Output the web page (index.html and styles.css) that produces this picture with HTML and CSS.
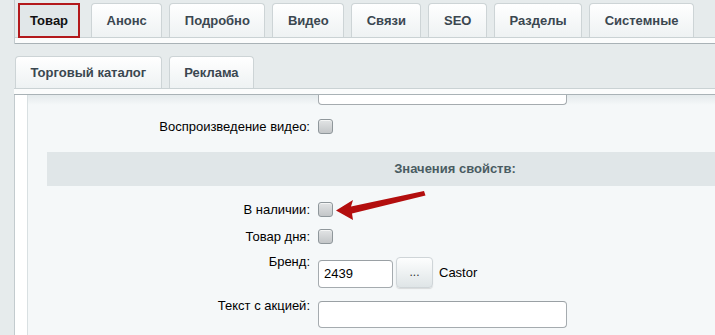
FILE: index.html
```html
<!DOCTYPE html>
<html lang="ru">
<head>
<meta charset="utf-8">
<title>Товар</title>
<link rel="stylesheet" href="styles.css">
</head>
<body>
<div class="tabbar tabbar-first">
  <div class="tabs">
    <div class="tab active">Товар</div>
    <div class="tab">Анонс</div>
    <div class="tab">Подробно</div>
    <div class="tab">Видео</div>
    <div class="tab">Связи</div>
    <div class="tab">SEO</div>
    <div class="tab">Разделы</div>
    <div class="tab">Системные</div>
  </div>
  <div class="band"></div>
</div>
<div class="tabbar tabbar-second">
  <div class="tabs">
    <div class="tab">Торговый каталог</div>
    <div class="tab">Реклама</div>
  </div>
  <div class="band"></div>
</div>
<div class="content">
  <div class="strip"></div>
  <div class="main">
    <div class="form">
      <div class="row row-cut">
        <div class="label"></div>
        <div class="value"><div class="input wide cut"></div></div>
      </div>
      <div class="row row-video">
        <div class="label">Воспроизведение видео:</div>
        <div class="value"><span class="checkbox"></span></div>
      </div>
      <div class="section">Значения свойств:</div>
      <div class="row row-stock">
        <div class="label">В наличии:</div>
        <div class="value"><span class="checkbox"></span></div>
        <svg class="arrow" width="100" height="40" viewBox="0 0 100 40">
          <polygon points="6,23.5 23,13 21,19.5 94,4 95.5,8.5 22,26.5 23,33" fill="#b30e0e"/>
        </svg>
      </div>
      <div class="row">
        <div class="label">Товар дня:</div>
        <div class="value"><span class="checkbox"></span></div>
      </div>
      <div class="row row-brand">
        <div class="label top">Бренд:</div>
        <div class="value">
          <div class="input short">2439</div>
          <div class="btn">...</div>
          <span class="brand-name">Castor</span>
        </div>
      </div>
      <div class="row row-text">
        <div class="label top">Текст с акцией:</div>
        <div class="value"><div class="input wide"></div></div>
      </div>
    </div>
  </div>
</div>
</body>
</html>
```
FILE: styles.css
```css
html, body {
  margin: 0;
  padding: 0;
}
body {
  width: 715px;
  height: 335px;
  overflow: hidden;
  background: #e6ebec;
  font-family: "Liberation Sans", Arial, sans-serif;
  font-size: 13px;
  color: #000;
}
.tabbar {
  margin-left: 14px;
  width: 900px;
}
.tabbar-first {
  border-left: 1px solid #c3cbce;
}
.tabbar-first .tabs {
  padding: 3px 0 0 3px;
  height: 34px;
}
.tabbar-second {
  margin-top: 12px;
}
.tabbar-second .tabs {
  padding-left: 1px;
  height: 32px;
}
.tabs {
  display: flex;
  gap: 7px;
  align-items: flex-start;
}
.tab {
  box-sizing: border-box;
  height: 100%;
  padding: 0 14.5px;
  border: 1px solid #cdd4d6;
  border-bottom: none;
  border-radius: 4px 4px 0 0;
  background: linear-gradient(#ffffff, #eef2f3);
  color: #3b4750;
  font-weight: bold;
  display: flex;
  align-items: center;
  white-space: nowrap;
}
.tab.active {
  position: relative;
  z-index: 1;
  height: 35px;
  padding: 0 10px 0 10px;
  border: 2px solid #b3191c;
  border-radius: 0;
  background: #e1e7e9;
  color: #111;
  margin-right: 4px;
}
.band {
  height: 5px;
  background: #fbfcfc;
  border-top: 1px solid #cad2d4;
  border-bottom: 1px solid #a9b2b6;
}
.content {
  margin-left: 14px;
  display: flex;
  height: 240px;
  border-left: 1px solid #c3cbce;
}
.strip {
  width: 12px;
  background: #ffffff;
  border-right: 1px solid #d9e0e2;
}
.main {
  flex: 1;
  padding-left: 19px;
  background: linear-gradient(#e4eaec, #f5f8f9 10px);
  overflow: hidden;
}
.form {
  width: 812px;
  position: relative;
}
.row {
  display: flex;
  align-items: center;
  min-height: 27px;
  position: relative;
}
.label {
  width: 263px;
  flex: none;
  text-align: right;
  line-height: 15px;
  white-space: nowrap;
}
.label.top {
  align-self: flex-start;
  margin-top: -3px;
}
.value {
  margin-left: 8px;
  display: flex;
  align-items: center;
}
.row-cut {
  min-height: 0;
  height: 10px;
  align-items: flex-start;
}
.row-video {
  margin-top: 8px;
}
.row-stock {
  margin-top: 10px;
}
.row-brand {
  margin-top: 7px;
  align-items: flex-start;
}
.row-text {
  margin-top: 13px;
  align-items: flex-start;
}
.checkbox {
  display: block;
  box-sizing: border-box;
  width: 15px;
  height: 15px;
  border: 1px solid #8f979b;
  border-radius: 3px;
  background: linear-gradient(#e2e4e5, #c3c6c8);
  box-shadow: inset 0 1px 0 #f4f5f5;
}
.input {
  box-sizing: border-box;
  background: #fff;
  border: 1px solid #a5abaf;
  border-top-color: #9aa0a4;
  border-radius: 4px;
  height: 28px;
  line-height: 26px;
  padding-left: 5px;
  font-size: 13px;
  color: #000;
}
.input.wide {
  width: 249px;
  height: 27px;
}
.input.cut {
  margin-top: -17px;
}
.input.short {
  width: 75px;
  margin-top: 2px;
}
.btn {
  box-sizing: border-box;
  width: 37px;
  height: 31px;
  margin-left: 3px;
  border: 1px solid #cfd5d8;
  border-radius: 4px;
  background: linear-gradient(#fdfefe, #dfe5e7);
  box-shadow: 0 1px 1px rgba(0,0,0,0.12);
  text-align: center;
  line-height: 29px;
  font-size: 12px;
  color: #333;
}
.brand-name {
  margin-left: 6px;
  line-height: 31px;
}
.section {
  margin-top: 12px;
  height: 34px;
  line-height: 34px;
  padding-left: 4px;
  background: #e0e6e8;
  text-align: center;
  font-weight: bold;
  color: #4a5c62;
}
.arrow {
  position: absolute;
  left: 283px;
  top: -9px;
}
```
